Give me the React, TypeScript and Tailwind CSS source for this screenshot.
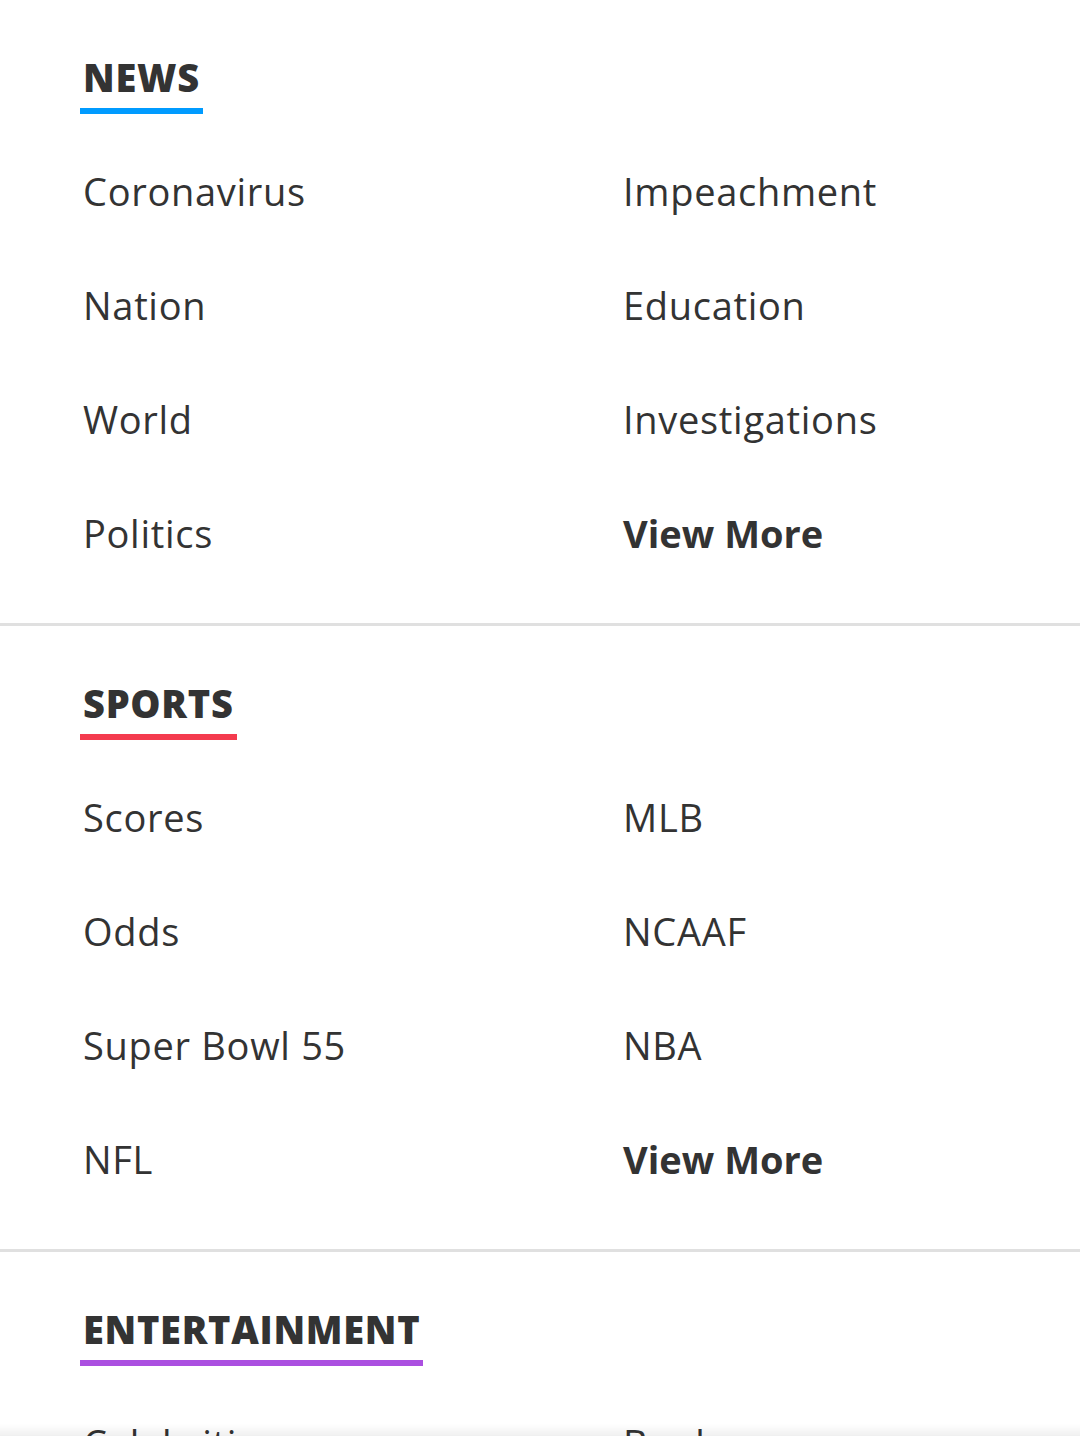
import React from "react";

type Section = {
  title: string;
  color: string;
  left: string[];
  right: string[];
};

const sections: Section[] = [
  {
    title: "NEWS",
    color: "border-[#009bff]",
    left: ["Coronavirus", "Nation", "World", "Politics"],
    right: ["Impeachment", "Education", "Investigations"],
  },
  {
    title: "SPORTS",
    color: "border-[#f43b4e]",
    left: ["Scores", "Odds", "Super Bowl 55", "NFL"],
    right: ["MLB", "NCAAF", "NBA"],
  },
  {
    title: "ENTERTAINMENT",
    color: "border-[#ab4fe0]",
    left: ["Celebrities", "Movies", "TV", "Music"],
    right: ["Books", "Awards", "Humor"],
  },
];

function NavSection({ section }: { section: Section }) {
  const rows = section.left.map((l, i) => [l, section.right[i]]);
  return (
    <section className="border-b-[3px] border-[#e0e0e0] pt-[56px] pb-[33px]">
      <div className="pl-[80px]">
        <h2
          className={`inline-block pl-[3px] pr-[3px] pb-[10px] border-b-[6px] ${section.color} text-[38px] leading-[42px] font-extrabold tracking-[0.7px] text-[#333333]`}
        >
          {section.title}
        </h2>
      </div>
      <ul className="mt-[20px] grid grid-cols-[540px_1fr] pl-[80px]">
        {rows.map(([l, r], i) => (
          <React.Fragment key={i}>
            <li className="h-[114px] flex items-center px-[3px]">
              <a href="#" className="text-[38px] tracking-[0.7px] text-[#333333]">
                {l}
              </a>
            </li>
            <li className="h-[114px] flex items-center px-[3px]">
              {r ? (
                <a href="#" className="text-[38px] tracking-[0.7px] text-[#333333]">
                  {r}
                </a>
              ) : (
                <a href="#" className="text-[38px] font-bold text-[#333333]">
                  View More
                </a>
              )}
            </li>
          </React.Fragment>
        ))}
      </ul>
    </section>
  );
}

export default function App() {
  return (
    <div className="relative min-h-screen bg-white font-['Open_Sans',sans-serif]">
      {sections.map((s) => (
        <NavSection key={s.title} section={s} />
      ))}
      <div className="fixed bottom-0 left-0 right-0 h-[12px] bg-gradient-to-b from-transparent to-black/[0.06] pointer-events-none" />
    </div>
  );
}
